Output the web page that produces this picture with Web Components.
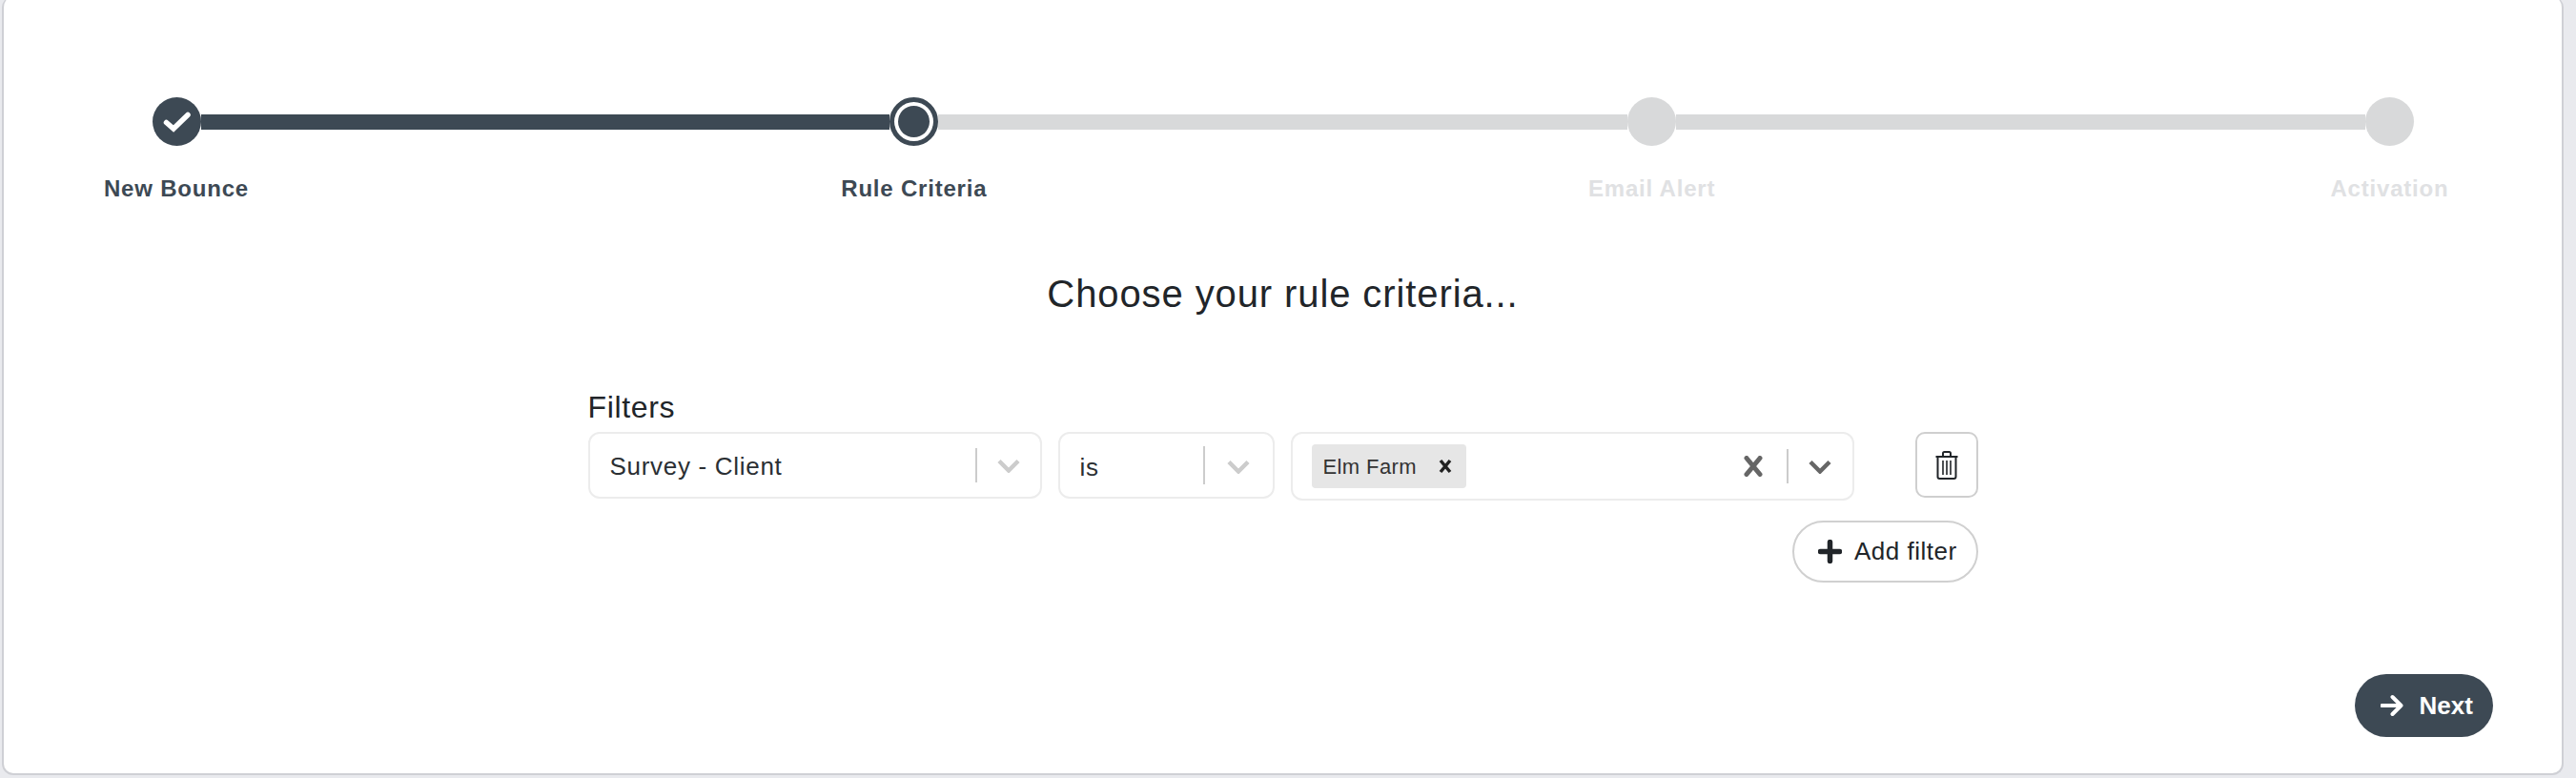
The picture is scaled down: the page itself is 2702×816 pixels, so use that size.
<!DOCTYPE html>
<html lang="en"><head><meta charset="utf-8"><title>Rule Criteria</title>
<style>
html,body{margin:0;height:816px;overflow:hidden;background:#e9eaee;font-family:"Liberation Sans",Arial,sans-serif;color:#212529}
</style></head><body>
<wizard-card>
  <wizard-stepper>
    <wizard-step state="done" label="New Bounce"></wizard-step><step-line active></step-line>
    <wizard-step state="current" label="Rule Criteria"></wizard-step><step-line></step-line>
    <wizard-step label="Email Alert"></wizard-step><step-line></step-line>
    <wizard-step label="Activation"></wizard-step>
  </wizard-stepper>
  <wizard-title>Choose your rule criteria...</wizard-title>
  <filter-panel>
    <filter-row>
      <select-box w="476" value="Survey - Client" c="66" tone="muted"></select-box>
      <select-box w="227" value="is" c="71" tone="muted" low></select-box>
      <select-box w="591" multi tall c="67"></select-box>
      <trash-button></trash-button>
    </filter-row>
    <add-filter>Add filter</add-filter>
  </filter-panel>
  <next-button>Next</next-button>
</wizard-card>
<script>
function def(name,css,html,init){
  customElements.define(name,class extends HTMLElement{
    constructor(){super();this.attachShadow({mode:'open'}).innerHTML='<style>'+css+'</style>'+html;}
    connectedCallback(){if(init)init(this,this.shadowRoot);}
  });
}
def('wizard-card',`:host{display:flex;flex-direction:column;box-sizing:border-box;margin:-4px 0 0 2px;width:2687px;height:817px;background:#fff;border:2.500px solid #cfd0d5;border-top:0;border-radius:12px;padding:106px 0 0 0;position:relative}`,`<slot></slot>`);
def('wizard-stepper',`:host{display:flex;align-items:flex-start;margin:0 155px 0 155.500px}`,`<slot></slot>`);
def('wizard-step',`:host{display:flex;flex-direction:column;align-items:center;width:51px;flex:none}
.dot{width:51px;height:51px;border-radius:50%;background:#d8d9da;display:flex;align-items:center;justify-content:center;box-sizing:border-box}
.done,.current{background:#3d4954}
.current{border:5px solid #3d4954}
.current i{display:block;width:33px;height:33px;border-radius:50%;background:#3d4954;box-shadow:0 0 0 4px #fff}
.lab{margin-top:31px;white-space:nowrap;font-size:24px;line-height:28px;font-weight:700;letter-spacing:.8px;color:#e0e1e3}
.on{color:#3d4954}`,
`<div class="dot"></div><div class="lab"></div>`,(el,r)=>{
  const s=el.getAttribute('state'),d=r.querySelector('.dot'),l=r.querySelector('.lab');
  l.textContent=el.getAttribute('label');
  if(s){d.classList.add(s);l.classList.add('on');}
  if(s==='done')d.innerHTML='<svg width="51" height="51" viewBox="0 0 51 51"><path d="M14.500 26.500l7.500 6.500L37 18.500" fill="none" stroke="#fff" stroke-width="5.500" stroke-linecap="round"/></svg>';
  if(s==='current')d.innerHTML='<i></i>';
});
def('step-line',`:host{display:block;flex:1;height:16px;margin-top:18px;background:#d8d9da}:host([active]){background:#3d4954}`,``);
def('wizard-title',`:host{display:block;text-align:center;font-size:40px;line-height:48px;margin-top:72px;color:#212529;letter-spacing:.9px}`,`<slot></slot>`);
def('filter-panel',`:host{display:block;width:1458px;margin:76px auto 0;position:relative}
.t{font-size:32px;line-height:38px;letter-spacing:.64px;color:#212529;margin-bottom:7px}`,`<div class="t">Filters</div><slot></slot>`);
def('filter-row',`:host{display:flex;align-items:flex-start;gap:17px}`,`<slot></slot>`);
const chev=(c)=>`<svg width="24" height="15" viewBox="0 0 24 15"><path d="M2 2.500l10 10 10-10" fill="none" stroke="${c}" stroke-width="4.500"/></svg>`;
def('select-box',`:host{display:flex;box-sizing:border-box;height:70px;border:2px solid #ececec;border-radius:12px;background:#fff;align-items:center;position:relative;flex:none}
:host([tall]){height:72px}
.v{flex:1;font-size:26px;padding:2px 0 0 21px;letter-spacing:.7px;white-space:nowrap;color:#2b2f33}
.sep{width:2px;height:36px;background:#cccccc;flex:none}
.c{display:flex;justify-content:center;flex:none}
.tag{display:inline-flex;align-items:center;box-sizing:border-box;margin-left:20px;width:162px;height:46px;background:#e6e6e6;border-radius:4px;font-size:22px;letter-spacing:.4px;padding:0 0 0 12px;color:#333}
.tag span{flex:1;padding-top:1px}
.tag svg{margin-right:15px}
.l{flex:1;display:flex;align-items:center;min-width:0}
.x{margin-right:24px;flex:none}`,
`<div class="l"></div><div class="sep"></div><div class="c"></div>`,(el,r)=>{
  el.style.width=el.getAttribute('w')+'px';
  const l=r.querySelector('.l'),c=r.querySelector('.c');
  c.style.width=el.getAttribute('c')+'px';
  if(el.hasAttribute('multi')){
    l.innerHTML='<div class="tag"><span>Elm Farm</span><svg width="14" height="16" viewBox="0 0 14 16"><path d="M2 2l10 12M12 2L2 14" stroke="#222" stroke-width="3.500" fill="none"/></svg></div><div style="flex:1"></div><svg class="x" width="22" height="22" viewBox="0 0 22 22"><path d="M4 2.500l14 17M18 2.500l-14 17" stroke="#666" stroke-width="5" stroke-linecap="round" fill="none"/></svg>';
    c.innerHTML=chev('#666');
  }else{
    l.innerHTML='<div class="v"></div>';
    l.firstChild.textContent=el.getAttribute('value');
    c.innerHTML=chev('#cccccc');
    if(el.hasAttribute('low')){l.firstChild.style.paddingTop='5px';r.querySelector('.sep').style.height='40px';c.style.paddingTop='3px';}
  }
});
def('trash-button',`:host{display:flex;box-sizing:border-box;width:66px;height:69px;border:2.500px solid #cfcfcf;border-radius:10px;align-items:center;justify-content:center;margin-left:47px;flex:none;background:#fff}`,
`<svg width="24" height="30" viewBox="0 0 24 30" fill="none" stroke="#212529" stroke-width="2"><path d="M.500 6h23M8 6V2.500C8 1.700 8.700 1 9.500 1h5c.8 0 1.500.7 1.500 1.500V6M2.500 6v21c0 1.100.9 2 2 2h15c1.100 0 2-.9 2-2V6"/><path d="M8 10v15M12 10v15M16 10v15" stroke-width="1.600"/></svg>`);
def('add-filter',`:host{display:flex;box-sizing:border-box;width:195px;height:65px;border:2.500px solid #d0d0d0;border-radius:33px;align-items:center;gap:13.500px;padding-left:25px;margin:21px 0 0 auto;font-size:26px;letter-spacing:.5px;color:#212529;white-space:nowrap;background:#fff}`,
`<svg width="25" height="25" viewBox="0 0 25 25" style="flex:none"><path d="M12.500 2.500v20M2.500 12.500h20" stroke="#212529" stroke-width="5.500" stroke-linecap="round"/></svg><slot></slot>`);
def('next-button',`:host{position:absolute;left:2465.500px;top:711px;display:flex;box-sizing:border-box;width:145px;height:66px;border-radius:33px;background:#3d4954;color:#fff;align-items:center;gap:17px;padding-left:27px;font-size:26px;font-weight:700;white-space:nowrap}`,
`<svg width="24" height="24" viewBox="0 0 24 24" style="flex:none"><path d="M1.500 12h20M12.500 3l9 9-9 9" fill="none" stroke="#fff" stroke-width="4" stroke-linecap="round" stroke-linejoin="round"/></svg><slot></slot>`);
</script>
</body></html>
